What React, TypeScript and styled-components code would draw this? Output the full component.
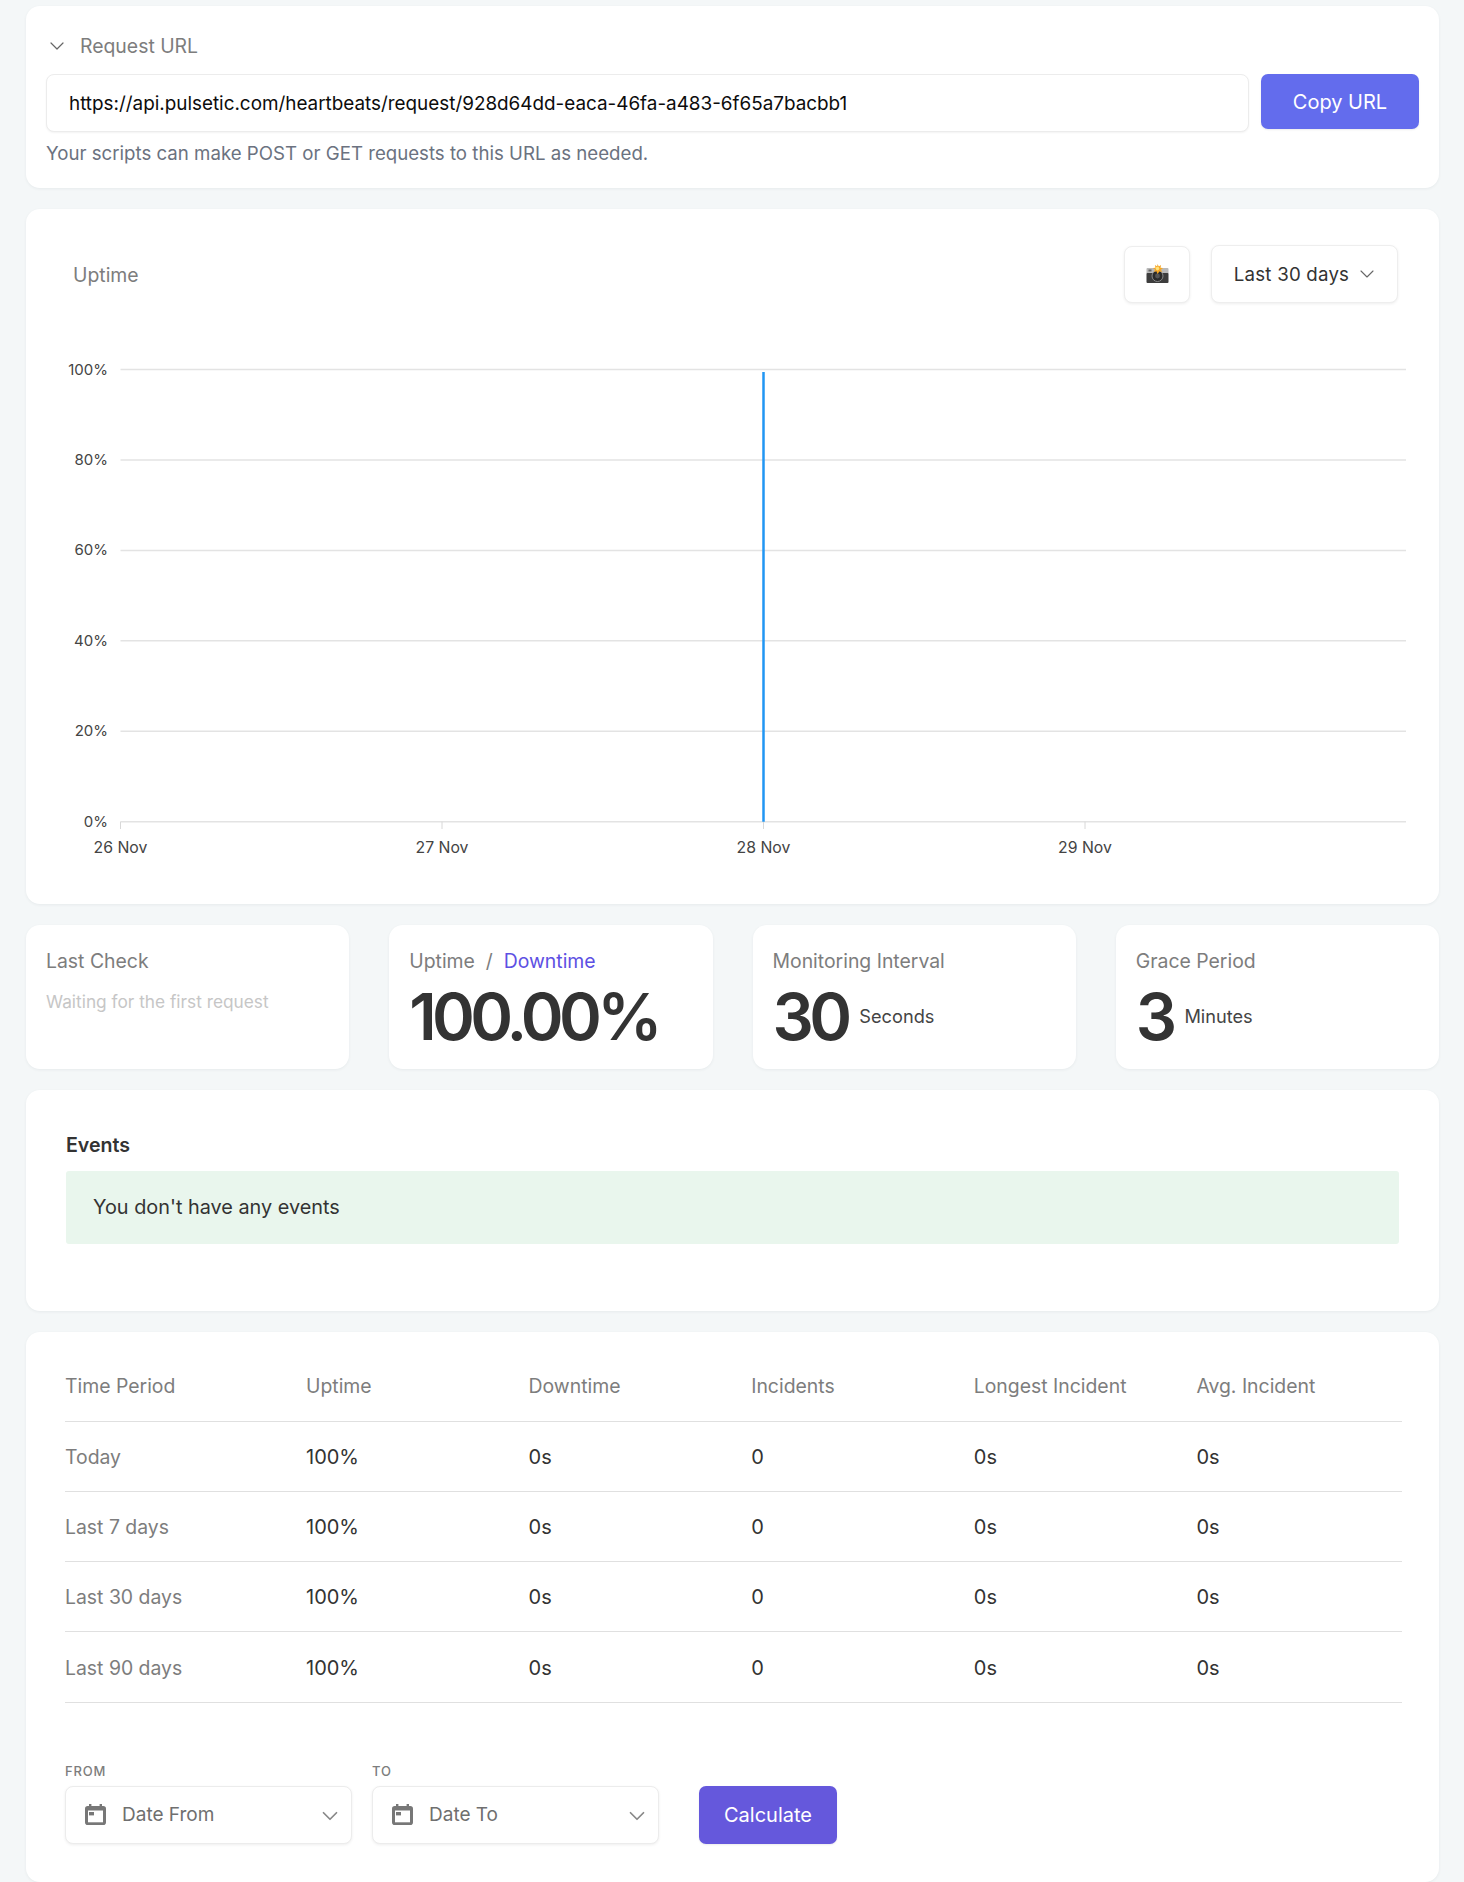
import React from 'react';
import styled, { createGlobalStyle } from 'styled-components';
import { ChevronDown } from 'lucide-react';

const GlobalStyle = createGlobalStyle`
  html, body {
    margin: 0;
    padding: 0;
    background: #f4f7f8;
    font-family: Inter, "Liberation Sans", sans-serif;
    color: #333;
    height: 1882px;
    overflow: hidden;
  }
  * { box-sizing: border-box; }
`;

const Page = styled.div`
  display: flex;
  flex-direction: column;
  gap: 21px;
  padding: 6px 25px 0 26px;
  height: 1882px;
  overflow: hidden;
`;

const Card = styled.section`
  background: #fff;
  border-radius: 14px;
  box-shadow: 0 1px 3px rgba(60, 70, 80, 0.07);
`;

const UrlCard = styled(Card)`
  height: 182px;
  padding: 20px 20px 0;
`;

const Disclosure = styled.div`
  display: flex;
  align-items: center;
  gap: 11px;
  height: 40px;
  margin: 0 0 8px -1px;
  color: #7d7d7d;
  font-size: 19.4px;
  line-height: 24px;
  svg { color: #666; }
`;

const UrlRow = styled.div`
  display: flex;
  align-items: flex-start;
  gap: 12px;
`;

const UrlInput = styled.div`
  flex: 1;
  height: 58px;
  display: flex;
  align-items: center;
  padding: 0 22px;
  background: #fff;
  border: 1px solid #ececec;
  border-radius: 8px;
  box-shadow: 0 1px 2px rgba(0, 0, 0, 0.05);
  color: #0c0c0c;
  font-size: 18.87px;
`;

const PrimaryButton = styled.button<{ $tone?: string; $width: number; $height: number }>`
  width: ${p => p.$width}px;
  height: ${p => p.$height}px;
  flex: none;
  border: 0;
  border-radius: 7px;
  background: ${p => p.$tone || '#636ced'};
  color: #fff;
  font-family: inherit;
  font-size: 20px;
  box-shadow: 0 1px 2px rgba(0, 0, 0, 0.08);
`;

const Hint = styled.p`
  margin: 10px 0 0;
  color: #6b7280;
  font-size: 18.67px;
  line-height: 24px;
`;

const ChartCard = styled(Card)`
  height: 695px;
  padding-top: 36px;
`;

const ChartHeader = styled.header`
  display: flex;
  align-items: center;
  padding: 0 41px 0 47px;
  height: 58px;
`;

const ChartTitle = styled.h2`
  flex: 1;
  margin: 1px 0 0;
  color: #7d7d7d;
  font-size: 19.4px;
  font-weight: 400;
`;

const OutlineBox = styled.div`
  display: flex;
  align-items: center;
  justify-content: center;
  background: #fff;
  border: 1px solid #eee;
  border-radius: 8px;
  box-shadow: 0 1px 3px rgba(0, 0, 0, 0.07);
`;

const ShotButton = styled(OutlineBox)`
  width: 66px;
  height: 57px;
  margin-right: 21px;
`;

const RangeSelect = styled(OutlineBox)`
  width: 187px;
  height: 58px;
  padding-left: 4px;
  gap: 6px;
  color: #333;
  font-size: 18.7px;
  letter-spacing: 0.2px;
  svg { color: #666; }
`;

const ChartSvg = styled.svg`
  display: block;
  font-family: Inter, "Liberation Sans", sans-serif;
`;

const StatGrid = styled.div`
  display: grid;
  grid-template-columns: repeat(4, 1fr);
  gap: 40px;
`;

const StatCard = styled(Card)`
  height: 144px;
  padding: 23px 20px 0;
`;

const StatLabel = styled.div`
  color: #7d7d7d;
  font-size: 19.4px;
  line-height: 26px;
  white-space: pre;
`;

const Accent = styled.span`
  color: #5d50e3;
`;

const Waiting = styled.div`
  margin-top: 16px;
  color: #c6c6c6;
  font-size: 17.3px;
  line-height: 24px;
`;

const StatValue = styled.div`
  display: flex;
  align-items: center;
  gap: 12px;
  margin-top: 8px;
  height: 70px;
`;

const BigNumber = styled.span`
  color: #333;
  font-size: 65px;
  font-weight: 600;
  letter-spacing: -4.7px;
  line-height: 70px;
`;

const Unit = styled.span`
  color: #444;
  font-size: 18.2px;
  margin-top: -2px;
`;

const EventsCard = styled(Card)`
  height: 221px;
  padding: 42px 40px 0;
`;

const SectionTitle = styled.h3`
  margin: 0 0 13px;
  color: #333;
  font-size: 19.6px;
  font-weight: 600;
  line-height: 26px;
`;

const Notice = styled.div`
  height: 73px;
  display: flex;
  align-items: center;
  padding: 0 27px 1px;
  background: #e9f6ed;
  border-radius: 3px;
  color: #333;
  font-size: 19.85px;
`;

const TableCard = styled(Card)`
  flex: 1;
  padding: 18px 37px 0 39px;
`;

const Table = styled.table`
  width: 1337px;
  border-collapse: collapse;
  table-layout: fixed;
  font-size: 20px;
`;

const HeadCell = styled.th<{ $w: number }>`
  width: ${p => p.$w}px;
  height: 71px;
  padding: 1px 0 0;
  text-align: left;
  font-size: 19.4px;
  font-weight: 400;
  color: #7d7d7d;
  border-bottom: 1px solid #e0e0e0;
`;

const RowLabel = styled.td`
  height: 70.3px;
  padding: 1px 0 0;
  font-size: 19.4px;
  color: #7d7d7d;
  border-bottom: 1px solid #e0e0e0;
`;

const ValueCell = styled.td`
  padding: 1px 0 0;
  color: #333;
  border-bottom: 1px solid #e0e0e0;
`;

const DateRow = styled.div`
  display: flex;
  align-items: flex-end;
  margin-top: 60px;
`;

const DateField = styled.div`
  width: 287px;
  margin-right: 20px;
`;

const FieldLabel = styled.label`
  display: block;
  margin-bottom: 7px;
  color: #7d7d7d;
  font-size: 13px;
  font-weight: 500;
  letter-spacing: 0.8px;
  line-height: 16px;
`;

const DateSelect = styled.div`
  display: flex;
  align-items: center;
  height: 58px;
  padding: 0 8px 0 19px;
  gap: 16px;
  background: #fff;
  border: 1px solid #ececec;
  border-radius: 8px;
  box-shadow: 0 1px 3px rgba(0, 0, 0, 0.07);
  color: #6f6f6f;
  font-size: 19px;
  svg:last-child { margin: 3px 0 0 auto; color: #888; }
`;

const CalculateSlot = styled.div`
  margin-left: 20px;
`;

function CameraFlash() {
  return (
    <svg width="25" height="20" viewBox="0 0 24 20">
      <rect x="1" y="4" width="22" height="6" rx="1" fill="#b9b9b9" />
      <rect x="1" y="9" width="22" height="10" rx="1" fill="#3d3d3d" />
      <rect x="3" y="5.500" width="3" height="2" fill="#666" />
      <circle cx="12" cy="12" r="5.500" fill="#2b2b2b" stroke="#8a8a8a" strokeWidth="1" />
      <circle cx="12" cy="12" r="2.400" fill="#555" />
      <path d="M12 0l1.300 2.600L15.600 1l-.6 2.800 2.600.3-2.200 1.600 1.400 2.200-2.700-.7L12 10l-1.100-2.800-2.700.7 1.400-2.200L7.400 4.100l2.600-.3L9.400 1l2.300 1.600z" fill="#f6a623" />
      <circle cx="12" cy="4.600" r="1.800" fill="#ffe27a" />
    </svg>
  );
}

function CalendarIcon() {
  return (
    <svg width="21" height="21" viewBox="0 0 21 21">
      <path d="M4 0h2.400v2h8.200V0H17v2h1.200A2.800 2.800 0 0 1 21 4.800V18.200A2.800 2.800 0 0 1 18.200 21H2.800A2.800 2.800 0 0 1 0 18.200V4.800A2.800 2.800 0 0 1 2.800 2H4z" fill="#777" />
      <rect x="3" y="6.500" width="15" height="11.800" fill="#fff" />
      <rect x="4" y="8" width="5" height="3.400" fill="#777" />
    </svg>
  );
}

const gridLines = [
  { label: '100%', y: 66.5 },
  { label: '80%', y: 156.9 },
  { label: '60%', y: 247.4 },
  { label: '40%', y: 337.8 },
  { label: '20%', y: 428.3 },
  { label: '0%', y: 518.7 },
];

const dayTicks = [
  { label: '26 Nov', x: 94.5 },
  { label: '27 Nov', x: 416 },
  { label: '28 Nov', x: 737.5 },
  { label: '29 Nov', x: 1059 },
];

function UptimeChart() {
  return (
    <ChartSvg width="1412" height="591" viewBox="0 0 1412 591">
      {gridLines.map(l => (
        <g key={l.label}>
          <line x1="94.5" x2="1380" y1={l.y} y2={l.y} stroke="#e3e3e3" strokeWidth="1.5" />
          <text x="82" y={l.y + 5} textAnchor="end" fontSize="15" fill="#444">{l.label}</text>
        </g>
      ))}
      {dayTicks.map(t => (
        <g key={t.label}>
          <line x1={t.x} x2={t.x} y1="518.700" y2="526" stroke="#d8d8d8" strokeWidth="1" />
          <text x={t.x} y="549.700" textAnchor="middle" fontSize="15.800" fill="#444">{t.label}</text>
        </g>
      ))}
      <line x1="737.5" x2="737.5" y1="69" y2="518.700" stroke="#2196f3" strokeWidth="2.5" />
    </ChartSvg>
  );
}

const rows = ['Today', 'Last 7 days', 'Last 30 days', 'Last 90 days'];
const columns = [
  { label: 'Time Period', w: 241 },
  { label: 'Uptime', w: 222.6 },
  { label: 'Downtime', w: 222.6 },
  { label: 'Incidents', w: 222.6 },
  { label: 'Longest Incident', w: 222.6 },
  { label: 'Avg. Incident', w: 205.6 },
];

export default function App() {
  return (
    <>
      <GlobalStyle />
      <Page>
        <UrlCard>
          <Disclosure>
            <ChevronDown size={24} strokeWidth={1.2} />
            Request URL
          </Disclosure>
          <UrlRow>
            <UrlInput>https://api.pulsetic.com/heartbeats/request/928d64dd-eaca-46fa-a483-6f65a7bacbb1</UrlInput>
            <PrimaryButton $width={158} $height={55}>Copy URL</PrimaryButton>
          </UrlRow>
          <Hint>Your scripts can make POST or GET requests to this URL as needed.</Hint>
        </UrlCard>

        <ChartCard>
          <ChartHeader>
            <ChartTitle>Uptime</ChartTitle>
            <ShotButton><CameraFlash /></ShotButton>
            <RangeSelect>
              Last 30 days
              <ChevronDown size={24} strokeWidth={1.1} />
            </RangeSelect>
          </ChartHeader>
          <UptimeChart />
        </ChartCard>

        <StatGrid>
          <StatCard>
            <StatLabel>Last Check</StatLabel>
            <Waiting>Waiting for the first request</Waiting>
          </StatCard>
          <StatCard>
            <StatLabel>Uptime  /  <Accent>Downtime</Accent></StatLabel>
            <StatValue><BigNumber>100.00%</BigNumber></StatValue>
          </StatCard>
          <StatCard>
            <StatLabel>Monitoring Interval</StatLabel>
            <StatValue><BigNumber>30</BigNumber><Unit>Seconds</Unit></StatValue>
          </StatCard>
          <StatCard>
            <StatLabel>Grace Period</StatLabel>
            <StatValue><BigNumber>3</BigNumber><Unit>Minutes</Unit></StatValue>
          </StatCard>
        </StatGrid>

        <EventsCard>
          <SectionTitle>Events</SectionTitle>
          <Notice>You don't have any events</Notice>
        </EventsCard>

        <TableCard>
          <Table>
            <thead>
              <tr>
                {columns.map(c => <HeadCell key={c.label} $w={c.w}>{c.label}</HeadCell>)}
              </tr>
            </thead>
            <tbody>
              {rows.map(r => (
                <tr key={r}>
                  <RowLabel>{r}</RowLabel>
                  <ValueCell>100%</ValueCell>
                  <ValueCell>0s</ValueCell>
                  <ValueCell>0</ValueCell>
                  <ValueCell>0s</ValueCell>
                  <ValueCell>0s</ValueCell>
                </tr>
              ))}
            </tbody>
          </Table>
          <DateRow>
            <DateField>
              <FieldLabel>FROM</FieldLabel>
              <DateSelect><CalendarIcon />Date From<ChevronDown size={26} strokeWidth={1.6} /></DateSelect>
            </DateField>
            <DateField>
              <FieldLabel>TO</FieldLabel>
              <DateSelect><CalendarIcon />Date To<ChevronDown size={26} strokeWidth={1.6} /></DateSelect>
            </DateField>
            <CalculateSlot>
              <PrimaryButton $tone="#6558dc" $width={138} $height={58}>Calculate</PrimaryButton>
            </CalculateSlot>
          </DateRow>
        </TableCard>
      </Page>
    </>
  );
}
